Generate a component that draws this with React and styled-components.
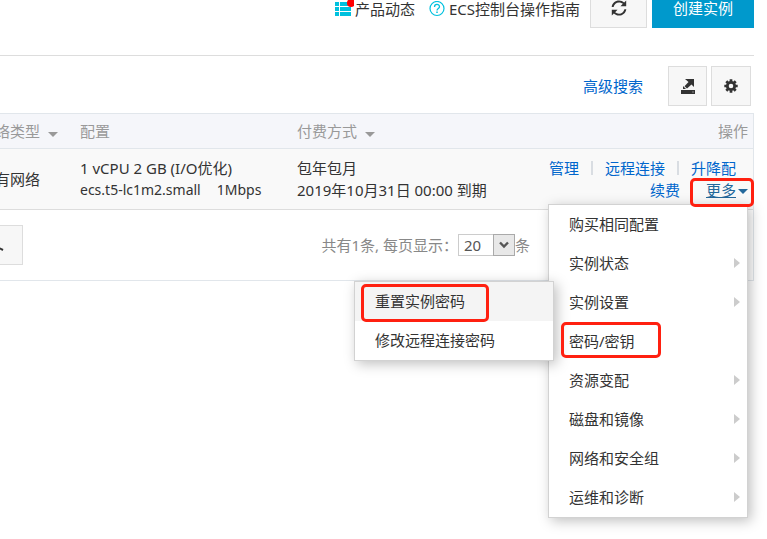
import React from 'react';
import styled, { createGlobalStyle, css } from 'styled-components';

const menuItems = [
    { label: '购买相同配置' },
    { label: '实例状态', arrow: true },
    { label: '实例设置', arrow: true },
    { label: '密码/密钥', sub: ['重置实例密码', '修改远程连接密码'] },
    { label: '资源变配', arrow: true },
    { label: '磁盘和镜像', arrow: true },
    { label: '网络和安全组', arrow: true },
    { label: '运维和诊断', arrow: true },
];

const ListIcon = () => (
    <svg width="20" height="20" viewBox="0 0 20 20" fill="#00c1de" aria-hidden="true">
        <path d="M1 3h4v4H1zM6 3h11v4H6zM1 8h4v4H1zM6 8h11v4H6zM1 13h4v4H1zM6 13h11v4H6z" />
        <circle cx="17" cy="4" r="4" fill="#ff0000" />
    </svg>
);

const HelpIcon = () => (
    <svg width="16" height="16" viewBox="0 0 16 16" fill="none" stroke="#00c1de" aria-hidden="true">
        <circle cx="8" cy="7.500" r="7" strokeWidth="1.2" />
        <path d="M5.500 6C5.500 2.600 10.500 2.600 10.500 5.800C10.500 7.600 8 7.500 8 9.600" strokeWidth="1.3" />
        <path d="M8 10.600v1.500" strokeWidth="1.5" />
    </svg>
);

const RefreshIcon = () => (
    <svg width="18" height="18" viewBox="0 0 16 16" fill="#333" aria-hidden="true">
        <path d="M1.500 7C1.900 3.700 4.700 1.300 8 1.300c1.800 0 3.400.7 4.600 1.800L14.400 1.300V6.400H9.300L11.400 4.300C10.500 3.500 9.300 3 8 3C5.600 3 3.700 4.700 3.200 7z" />
        <path d="M14.500 9C14.100 12.300 11.300 14.700 8 14.700c-1.800 0-3.400-.7-4.600-1.800L1.600 14.700V9.600H6.700L4.600 11.700c.9.8 2.100 1.300 3.400 1.300c2.400 0 4.300-1.700 4.800-4z" />
    </svg>
);

const ExportIcon = () => (
    <svg width="16" height="16" viewBox="0 0 16 16" fill="#333" aria-hidden="true">
        <path d="M1 12h14v4H1z" />
        <path d="M5 1h9v8l-2.500-2.500L7 10.500 4.500 8.300 8.500 4z" />
        <path d="M3 8l3 3H3z" />
        <path d="M12 13.500h2v1h-2z" fill="#888" />
    </svg>
);

const GearIcon = () => (
    <svg width="14" height="14" viewBox="0 0 14 14" aria-hidden="true">
        <circle cx="7" cy="7" r="3.700" fill="none" stroke="#333" strokeWidth="2.800" />
        <path
            d="M7 .3v2.500M7 11.200v2.500M.3 7h2.500M11.200 7h2.500M2.300 2.300l1.700 1.700M10 10l1.700 1.700M11.700 2.300L10 4M4 10l-1.700 1.700"
            stroke="#333"
            strokeWidth="2.700"
        />
    </svg>
);

const App = () => {
    return (
        <Page>
            <GlobalStyle />
            <TopBar>
                <TopLink href="#news"><ListIcon />产品动态</TopLink>
                <TopLink href="#guide"><HelpIcon />ECS控制台操作指南</TopLink>
                <Buttons $gap={5}>
                    <Button $width={57} aria-label="刷新"><RefreshIcon /></Button>
                    <Button $width={102} $primary>创建实例</Button>
                </Buttons>
            </TopBar>

            <SearchBar>
                <Link href="#search">高级搜索</Link>
                <Buttons $gap={4}>
                    <Button $width={39} aria-label="导出"><ExportIcon /></Button>
                    <Button $width={40} aria-label="设置"><GearIcon /></Button>
                </Buttons>
            </SearchBar>

            <Table>
                <colgroup>
                    <col width="100" />
                    <col width="217" />
                    <col width="220" />
                    <col />
                </colgroup>
                <thead>
                    <tr>
                        <Th>网络类型<Caret /></Th>
                        <Th>配置</Th>
                        <Th>付费方式<Caret /></Th>
                        <Th $right>操作</Th>
                    </tr>
                </thead>
                <tbody>
                    <tr>
                        <Td>专有网络</Td>
                        <Td>
                            1 vCPU 2 GB (I/O优化)<br />
                            <Specs><span>ecs.t5-lc1m2.small</span><span>1Mbps</span></Specs>
                        </Td>
                        <Td>包年包月<br />2019年10月31日 00:00 到期</Td>
                        <Td $right>
                            <Actions $inset>
                                <Link href="#manage">管理</Link>
                                <Divider />
                                <Link href="#connect">远程连接</Link>
                                <Divider />
                                <Link href="#resize">升降配</Link>
                            </Actions>
                            <Actions>
                                <Link href="#renew">续费</Link>
                                <More>
                                    <MoreButton aria-expanded="true"><u>更多</u><Caret $color="#23689b" $tight /></MoreButton>
                                    <Mark $area="-1px -6px -6px -16px" />
                                    <Menu>
                                        {menuItems.map((item) => (
                                            <Item key={item.label}>
                                                <ItemButton>{item.label}{item.arrow && <Arrow />}</ItemButton>
                                                {item.sub && (
                                                    <>
                                                        <Mark $area="0 86px 3px 12px" />
                                                        <SubMenu>
                                                            {item.sub.map((label, i) => (
                                                                <Item key={label}>
                                                                    <ItemButton $active={i === 0}>{label}</ItemButton>
                                                                    {i === 0 && <Mark $area="2px 64px -1px 6px" />}
                                                                </Item>
                                                            ))}
                                                        </SubMenu>
                                                    </>
                                                )}
                                            </Item>
                                        ))}
                                    </Menu>
                                </More>
                            </Actions>
                        </Td>
                    </tr>
                </tbody>
            </Table>

            <Footer>
                <Button $width={51} aria-label="更多操作">
                    <svg width="14" height="14" viewBox="0 0 14 14" aria-hidden="true">
                        <path d="M6 9l6 3" stroke="#333" strokeWidth="2" />
                    </svg>
                </Button>
                <PageSize>
                    <label htmlFor="size">共有1条, 每页显示：</label>
                    <SelectBox>
                        <Select id="size" defaultValue="20">
                            <option>20</option>
                            <option>50</option>
                        </Select>
                        <SelectArrow>
                            <svg width="10" height="8" viewBox="0 0 10 8" fill="none">
                                <path d="M1 1.500l4 4 4-4" stroke="#555" strokeWidth="2.400" />
                            </svg>
                        </SelectArrow>
                    </SelectBox>
                    条
                </PageSize>
            </Footer>
        </Page>
    );
}

export default App;

const GlobalStyle = createGlobalStyle`
    * {
        box-sizing: border-box;
    }

    body {
        margin: 0;
        background-color: #fff;
        overflow-x: hidden;
    }

    body, button, select {
        font-family: "Noto Sans", "Noto Sans CJK SC", sans-serif;
        font-size: 15px;
        line-height: 22px;
        color: #333;
    }
`

const Page = styled.div`
    padding-right: 13px;
    min-height: 100vh;
    overflow: hidden;
`

/* the bar is scrolled partly out of view */
const TopBar = styled.header`
    display: flex;
    justify-content: flex-end;
    align-items: center;
    margin-top: -12px;
    padding-bottom: 27px;
    border-bottom: 1px solid #ddd;
`

const TopLink = styled.a`
    display: flex;
    align-items: center;
    gap: 4px;
    margin-right: 14px;
    padding-top: 2px;
    color: #333;
    text-decoration: none;

    & + & {
        margin-right: 10px;
    }

    svg:first-child[width="20"] {
        margin-right: -3px;
    }
`

const Buttons = styled.div`
    display: flex;
    gap: ${props => props.$gap}px;
`

const Button = styled.button`
    display: flex;
    align-items: center;
    justify-content: center;
    width: ${props => props.$width}px;
    height: 40px;
    padding: 0;
    border: 1px solid #ddd;
    background-color: #f7f7f7;

    ${props => props.$primary && css`
        border-color: #0099cc;
        background-color: #0099cc;
        color: #fff;
    `}
`

const SearchBar = styled.div`
    display: flex;
    justify-content: flex-end;
    align-items: center;
    gap: 25px;
    padding: 10px 3px 7px 0;
`

const Link = styled.a`
    color: #0066cc;
    text-decoration: none;
`

/* first column runs off the left edge */
const Table = styled.table`
    width: calc(100% + 29px);
    margin-left: -29px;
    table-layout: fixed;
    border-spacing: 0;
    border: 1px solid #e1e6eb;
    border-bottom: 0;
`

const Th = styled.th`
    padding: 6px 5px 6px 8px;
    border-bottom: 1px solid #e1e6eb;
    background-color: #f5f6fa;
    color: #999;
    font-weight: normal;
    text-align: ${props => props.$right ? 'right' : 'left'};
    white-space: nowrap;
`

const Td = styled.td`
    padding: 8px 5px 8px 8px;
    border-bottom: 1px solid #ddd;
    background-color: #f9f9f9;
    text-align: ${props => props.$right ? 'right' : 'left'};
    white-space: nowrap;
`

const Specs = styled.span`
    display: flex;
    gap: 16px;
    font-size: 14px;
`

const Caret = styled.i`
    display: inline-block;
    margin-left: ${props => props.$tight ? 2 : 8}px;
    border: 5px solid transparent;
    border-top-color: ${props => props.$color || '#999'};
    border-bottom: 0;
    vertical-align: ${props => props.$tight ? 'middle' : 'baseline'};
`

const Actions = styled.div`
    display: flex;
    justify-content: flex-end;
    align-items: center;
    gap: 12px;
    padding-right: ${props => props.$inset ? 12 : 0}px;
`

const Divider = styled.span`
    width: 2px;
    height: 14px;
    background-color: #d9dde2;
`

const More = styled.div`
    position: relative;
    margin-left: 14px;
`

const MoreButton = styled.button`
    display: block;
    padding: 0;
    border: 0;
    background: none;
    color: #23689b;
`

const Mark = styled.span`
    position: absolute;
    inset: ${props => props.$area};
    z-index: 3;
    border: 3px solid #ff2010;
    border-radius: 5px;
    pointer-events: none;
`

const menuBox = css`
    position: absolute;
    width: 200px;
    margin: 0;
    padding: 0;
    border: 1px solid #d2d2d2;
    background-color: #fff;
    box-shadow: 3px 3px 12px rgba(0, 0, 0, 0.25);
    list-style: none;
`

const Menu = styled.ul`
    ${menuBox}
    top: 25px;
    right: 0;
    z-index: 1;
`

const SubMenu = styled.ul`
    ${menuBox}
    top: -41px;
    right: 193px;
    z-index: 2;
`

const Item = styled.li`
    position: relative;
`

const ItemButton = styled.button`
    display: flex;
    align-items: center;
    justify-content: space-between;
    width: 100%;
    height: 39px;
    padding: 0 7px 2px 20px;
    border: 0;
    background-color: ${props => props.$active ? '#f4f4f4' : '#fff'};
`

const Arrow = styled.i`
    border: 5px solid transparent;
    border-left: 6px solid #ccc;
    border-right: 0;
`

const Footer = styled.div`
    display: flex;
    align-items: center;
    justify-content: space-between;
    margin-left: -29px;
    padding: 15px 223px 15px 0;
    border: 1px solid #e1e6eb;
    border-top: 0;
`

const PageSize = styled.div`
    display: flex;
    align-items: center;
    color: #888;
`

const SelectBox = styled.div`
    position: relative;
`

const Select = styled.select`
    display: block;
    width: 57px;
    height: 22px;
    padding: 0 5px;
    border: 1px solid #ccc;
    border-radius: 0;
    background-color: #fff;
    color: #555;
    line-height: 20px;
    appearance: none;
`

const SelectArrow = styled.span`
    position: absolute;
    top: 0;
    right: 0;
    display: flex;
    align-items: center;
    justify-content: center;
    width: 22px;
    height: 22px;
    border: 1px solid #aaa;
    background-color: #e8e8e8;
    pointer-events: none;
`
